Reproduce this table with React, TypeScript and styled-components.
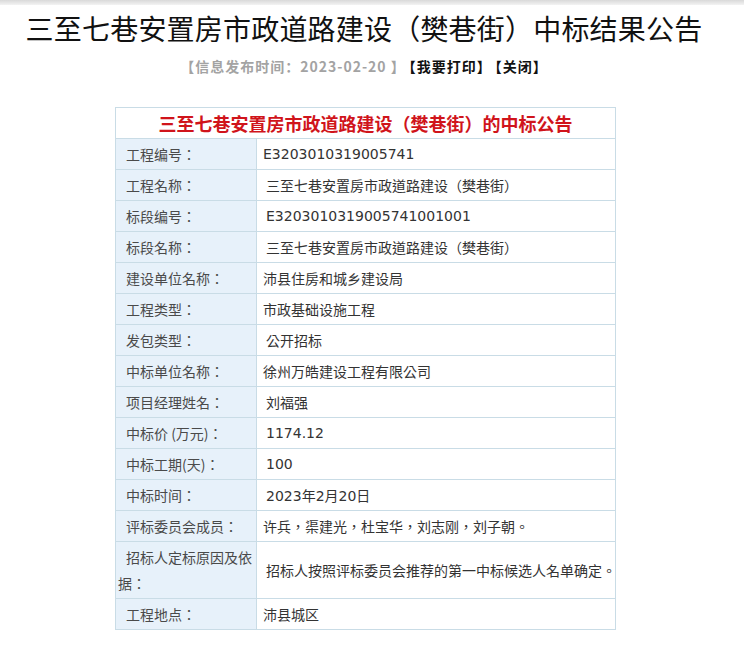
import React from "react";
import styled, { createGlobalStyle } from "styled-components";

const GlobalStyle = createGlobalStyle`
  html, body {
    margin: 0;
    padding: 0;
    background: #ffffff;
  }
  body {
    font-family: "Noto Sans CJK SC", "Noto Sans", sans-serif;
    color: #333;
  }
`;

const Page = styled.div`
  width: 728px;
  min-height: 647px;
  background: #fff;
`;

const TopShade = styled.div`
  width: 744px;
  height: 5px;
  background: linear-gradient(#d9d9d9, #f3f3f3);
`;

const Title = styled.h1`
  margin: 0;
  padding-top: 5px;
  font-family: "Noto Sans CJK SC", sans-serif;
  font-weight: 400;
  font-size: 28px;
  line-height: 36px;
  text-align: center;
  color: #111;
  letter-spacing: 0.2px;
`;

const Meta = styled.div`
  margin-top: 10px;
  text-align: center;
  font-family: "Noto Sans CJK SC", sans-serif;
  font-size: 14px;
  font-weight: 700;
  line-height: 20px;
  letter-spacing: 1px;
`;

const MetaItem = styled.span<{ $muted?: boolean }>`
  color: ${(p) => (p.$muted ? "#a3a3a3" : "#111")};
  margin-left: ${(p) => (p.$muted ? "0" : "3px")};
`;

const Table = styled.table`
  margin: 31px 0 0 115px;
  width: 501px;
  border-collapse: collapse;
  table-layout: fixed;
`;

const LabelCol = styled.col`
  width: 141px;
`;

const HeadCell = styled.th`
  height: 30px;
  padding: 0;
  border: 1px solid #c9dce6;
  font-family: "Noto Sans CJK SC", sans-serif;
  font-size: 18px;
  font-weight: 700;
  color: #d0141b;
  text-align: center;
  background: #fff;
  line-height: 28px;
`;

const Row = styled.tr<{ $tall?: boolean }>`
  height: ${(p) => (p.$tall ? "57px" : "31px")};
`;

const Label = styled.td`
  box-sizing: border-box;
  padding: 0 2px;
  text-indent: 8px;
  border: 1px solid #c9dce6;
  background: #e7f1fa;
  font-family: "Noto Sans CJK TC", "Noto Sans CJK SC", sans-serif;
  font-size: 14px;
  line-height: 26px;
  color: #4a4a4a;
  vertical-align: middle;
  word-break: break-all;
`;

const Value = styled.td<{ $indent?: boolean }>`
  padding: 0 0 0 ${(p) => (p.$indent ? "9px" : "6px")};
  border: 1px solid #c9dce6;
  font-family: "DejaVu Sans", "Noto Sans CJK TC", "Noto Sans CJK SC", sans-serif;
  font-size: 14px;
  color: #333;
  vertical-align: middle;
  white-space: nowrap;
  overflow: hidden;
`;

const rows: { label: string; value: string; indent?: boolean; tall?: boolean }[] = [
  { label: "工程编号：", value: "E3203010319005741" },
  { label: "工程名称：", value: "三至七巷安置房市政道路建设（樊巷街）", indent: true },
  { label: "标段编号：", value: "E3203010319005741001001", indent: true },
  { label: "标段名称：", value: "三至七巷安置房市政道路建设（樊巷街）", indent: true },
  { label: "建设单位名称：", value: "沛县住房和城乡建设局" },
  { label: "工程类型：", value: "市政基础设施工程" },
  { label: "发包类型：", value: "公开招标", indent: true },
  { label: "中标单位名称：", value: "徐州万皓建设工程有限公司" },
  { label: "项目经理姓名：", value: "刘福强", indent: true },
  { label: "中标价 (万元)：", value: "1174.12", indent: true },
  { label: "中标工期(天)：", value: "100", indent: true },
  { label: "中标时间：", value: "2023年2月20日", indent: true },
  { label: "评标委员会成员：", value: "许兵，渠建光，杜宝华，刘志刚，刘子朝。" },
  {
    label: "招标人定标原因及依据：",
    value: "招标人按照评标委员会推荐的第一中标候选人名单确定。",
    indent: true,
    tall: true,
  },
  { label: "工程地点：", value: "沛县城区" },
];

export default function App() {
  return (
    <Page>
      <GlobalStyle />
      <TopShade />
      <Title>三至七巷安置房市政道路建设（樊巷街）中标结果公告</Title>
      <Meta>
        <MetaItem $muted>【信息发布时间：2023-02-20 】</MetaItem>
        <MetaItem>【我要打印】</MetaItem>
        <MetaItem>【关闭】</MetaItem>
      </Meta>
      <Table>
        <colgroup>
          <LabelCol />
          <col />
        </colgroup>
        <thead>
          <tr>
            <HeadCell colSpan={2}>三至七巷安置房市政道路建设（樊巷街）的中标公告</HeadCell>
          </tr>
        </thead>
        <tbody>
          {rows.map((r) => (
            <Row key={r.label} $tall={r.tall}>
              <Label>{r.label}</Label>
              <Value $indent={r.indent}>{r.value}</Value>
            </Row>
          ))}
        </tbody>
      </Table>
    </Page>
  );
}
